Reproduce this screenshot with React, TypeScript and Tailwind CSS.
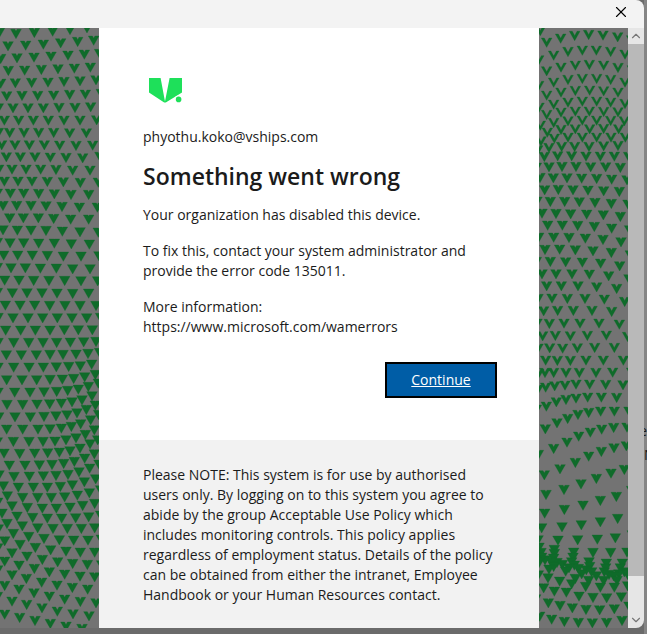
import { ChevronDown, ChevronUp, X } from 'lucide-react';

interface MarkRow {
  /** How deep the top of the arrow is cut: 0 is a solid triangle, 1 a thin V */
  cut: number;
  /** x, y pairs */
  at: number[];
}

const leftRows: MarkRow[] = [
  { cut: 0.3, at: [-2, 98, 48, 101, 103, 98, 158, 94, 210, 89, 261, 84] },
  { cut: 0.35, at: [24, 138, 77, 136, 130, 133, 182, 129, 233, 125, 281, 121] },
  { cut: 0.35, at: [2, 176, 51, 174, 102, 172, 153, 169, 204, 166, 253, 163, 299, 161] },
  { cut: 0.4, at: [25, 212, 74, 211, 124, 209, 174, 207, 223, 205, 271, 202] },
  { cut: 0.45, at: [2, 250, 46, 249, 95, 248, 144, 247, 192, 245, 240, 243, 288, 240] },
  { cut: 0.45, at: [20, 288, 66, 287, 113, 287, 161, 286, 209, 284, 256, 283, 304, 281] },
  { cut: 0.5, at: [-5, 324, 39, 324, 84, 324, 130, 324, 177, 323, 225, 323, 272, 321] },
  { cut: 0.55, at: [13, 361, 56, 361, 100, 361, 145, 361, 192, 361, 240, 361, 290, 360] },
  { cut: 0.55, at: [-5, 398, 29, 398, 72, 398, 116, 398, 161, 398, 209, 399, 259, 399] },
  { cut: 0.55, at: [5, 435, 45, 435, 88, 435, 133, 435, 179, 436, 228, 437, 278, 436] },
  { cut: 0.5, at: [19, 471, 61, 471, 105, 471, 151, 472, 198, 473, 248, 474, 300, 470] },
  { cut: 0.5, at: [-4, 508, 36, 508, 78, 508, 122, 508, 168, 509, 218, 511, 270, 511] },
  { cut: 0.4, at: [13, 544, 54, 544, 96, 544, 142, 545, 190, 546, 241, 548, 295, 547] },
  { cut: 0.3, at: [-8, 580, 31, 580, 71, 580, 116, 581, 163, 582, 213, 584, 266, 584] },
  { cut: 0.25, at: [9, 617, 50, 617, 93, 617, 138, 618, 186, 620, 238, 622, 292, 622] },
  { cut: 0.2, at: [29, 654, 70, 654, 115, 654, 161, 656, 212, 658, 266, 658] },
  { cut: 0.1, at: [9, 690, 52, 691, 93, 691, 138, 692, 187, 694, 240, 696, 295, 697] },
  { cut: 0.05, at: [-8, 728, 30, 729, 71, 729, 116, 730, 163, 730, 214, 732, 268, 733] },
  { cut: 0, at: [11, 766, 53, 766, 97, 766, 142, 767, 190, 769, 243, 769, 297, 768] },
  { cut: 0, at: [-8, 803, 33, 804, 76, 804, 121, 805, 169, 805, 218, 807, 270, 807] },
  { cut: 0, at: [14, 841, 57, 841, 101, 842, 147, 842, 194, 842, 243, 843, 293, 843] },
  { cut: 0, at: [-8, 878, 37, 879, 81, 879, 126, 879, 171, 880, 218, 881, 266, 880] },
  { cut: 0, at: [16, 916, 60, 916, 104, 916, 149, 917, 195, 917, 240, 917, 288, 917] },
  { cut: 0, at: [-6, 953, 39, 954, 84, 954, 128, 954, 172, 954, 216, 954, 260, 954, 302, 953] },
  { cut: 0, at: [17, 991, 62, 991, 106, 991, 150, 991, 193, 990, 235, 990, 277, 990] },
  { cut: 0, at: [-6, 1028, 41, 1028, 86, 1028, 129, 1028, 170, 1028, 211, 1027, 251, 1026, 288, 1025] },
  { cut: 0, at: [19, 1065, 64, 1065, 109, 1065, 150, 1064, 189, 1064, 228, 1063, 264, 1061, 299, 1058] },
  { cut: 0, at: [-6, 1102, 41, 1102, 87, 1102, 130, 1102, 169, 1101, 206, 1100, 241, 1098, 275, 1093] },
  { cut: 0, at: [20, 1140, 66, 1140, 110, 1140, 150, 1139, 187, 1138, 221, 1136, 254, 1131, 286, 1124] },
  { cut: 0, at: [-6, 1177, 44, 1177, 90, 1177, 132, 1176, 170, 1175, 203, 1172, 235, 1168, 265, 1160, 295, 1150] },
  { cut: 0.1, at: [21, 1214, 68, 1214, 111, 1213, 149, 1212, 184, 1210, 216, 1206, 246, 1200, 276, 1188] },
  { cut: 0.1, at: [-4, 1251, 45, 1251, 91, 1251, 132, 1250, 168, 1248, 201, 1245, 231, 1239, 259, 1229, 286, 1216] },
  { cut: 0.1, at: [20, 1288, 68, 1288, 114, 1288, 150, 1287, 184, 1285, 214, 1280, 242, 1272, 272, 1260, 296, 1244] },
  { cut: 0.1, at: [-8, 1326, 40, 1325, 87, 1325, 129, 1325, 165, 1324, 198, 1320, 228, 1314, 256, 1304, 283, 1290] },
  { cut: 0.1, at: [12, 1360, 59, 1361, 104, 1360, 143, 1359, 178, 1357, 210, 1353, 240, 1345, 270, 1332, 293, 1320] },
  { cut: 0.1, at: [28, 1396, 75, 1396, 118, 1395, 156, 1394, 191, 1391, 223, 1385, 254, 1375, 283, 1362] },
  { cut: 0.1, at: [-3, 1425, 42, 1430, 88, 1429, 130, 1428, 168, 1427, 204, 1424, 237, 1416, 269, 1405, 297, 1393] },
  { cut: 0.05, at: [10, 1458, 55, 1462, 100, 1462, 142, 1462, 181, 1460, 217, 1455, 253, 1446, 287, 1437] },
  { cut: 0.05, at: [22, 1488, 68, 1493, 113, 1493, 154, 1493, 194, 1491, 232, 1486, 268, 1479, 302, 1470] },
  { cut: 0.05, at: [-7, 1507, 36, 1518, 82, 1523, 127, 1525, 169, 1525, 210, 1522, 248, 1517, 284, 1511] },
  { cut: 0.05, at: [6, 1540, 51, 1549, 98, 1553, 142, 1555, 185, 1555, 227, 1554, 266, 1551, 302, 1546] },
  { cut: 0.05, at: [21, 1571, 67, 1578, 113, 1584, 159, 1586, 202, 1586, 244, 1586, 284, 1584] },
  { cut: 0.05, at: [-5, 1587, 40, 1601, 86, 1610, 132, 1616, 178, 1620, 221, 1621, 264, 1621, 304, 1618] },
  { cut: 0.1, at: [14, 1623, 60, 1634, 106, 1643, 152, 1650, 198, 1654, 241, 1657, 284, 1657] },
  { cut: 0.15, at: [-7, 1644, 36, 1659, 81, 1669, 127, 1679, 173, 1686, 218, 1691, 262, 1694, 305, 1695] },
  { cut: 0.2, at: [14, 1684, 57, 1696, 103, 1706, 148, 1716, 194, 1723, 240, 1729, 284, 1731] },
  { cut: 0.25, at: [-7, 1710, 36, 1725, 79, 1736, 125, 1747, 171, 1756, 217, 1763, 263, 1768] },
  { cut: 0.35, at: [14, 1757, 57, 1768, 102, 1779, 148, 1789, 194, 1798, 241, 1805, 288, 1809] },
  { cut: 0.45, at: [-8, 1790, 36, 1804, 80, 1814, 126, 1824, 172, 1834, 219, 1842, 267, 1848] },
  { cut: 0.4, at: [14, 1843, 59, 1853, 105, 1862, 151, 1871, 198, 1879, 246, 1886] },
];

const rightRows: MarkRow[] = [
  { cut: 0.65, at: [10, 92, 29, 127, 71, 115, 113, 107, 155, 104, 198, 106, 242, 111, 284, 120] },
  { cut: 0.75, at: [5, 180, 50, 166, 93, 155, 136, 151, 178, 151, 221, 155, 264, 163] },
  { cut: 0.75, at: [29, 213, 72, 202, 115, 196, 157, 194, 200, 196, 243, 203, 286, 210] },
  { cut: 0.8, at: [5, 257, 50, 247, 93, 239, 136, 236, 179, 236, 221, 239, 264, 247] },
  { cut: 0.8, at: [29, 286, 72, 277, 115, 272, 158, 271, 200, 273, 243, 277] },
  { cut: 0.8, at: [6, 322, 50, 313, 93, 307, 136, 304, 179, 304, 221, 307, 264, 311] },
  { cut: 0.8, at: [29, 344, 72, 337, 115, 334, 157, 334, 200, 335, 243, 336] },
  { cut: 0.8, at: [10, 376, 50, 368, 93, 363, 136, 361, 179, 361, 221, 362, 262, 363] },
  { cut: 0.75, at: [31, 397, 72, 389, 115, 387, 158, 387, 200, 386, 245, 387] },
  { cut: 0.75, at: [12, 423, 52, 415, 93, 412, 136, 412, 179, 412, 222, 412, 265, 412] },
  { cut: 0.7, at: [2, 450, 36, 443, 74, 440, 113, 440, 156, 440, 200, 438, 243, 437] },
  { cut: 0.55, at: [22, 470, 62, 468, 104, 468, 147, 469, 190, 469, 232, 469, 275, 470] },
  { cut: 0.45, at: [-2, 502, 36, 501, 75, 500, 117, 500, 161, 501, 206, 501, 250, 503] },
  { cut: 0.4, at: [9, 533, 49, 534, 90, 534, 134, 535, 179, 536, 224, 538, 270, 540] },
  { cut: 0.35, at: [23, 570, 64, 569, 108, 570, 153, 571, 200, 573, 247, 575] },
  { cut: 0.3, at: [0, 604, 40, 605, 83, 605, 127, 606, 174, 608, 223, 611, 273, 613] },
  { cut: 0.25, at: [15, 640, 57, 641, 101, 642, 149, 643, 199, 645, 250, 650] },
  { cut: 0.25, at: [32, 676, 76, 676, 122, 677, 172, 680, 224, 685, 278, 690] },
  { cut: 0.3, at: [5, 712, 50, 712, 96, 713, 145, 715, 198, 719, 252, 726] },
  { cut: 0.3, at: [24, 749, 68, 748, 115, 750, 168, 753, 223, 758, 280, 765] },
  { cut: 0.35, at: [-2, 785, 40, 785, 86, 786, 136, 787, 191, 790, 248, 798] },
  { cut: 0.4, at: [15, 822, 57, 822, 105, 822, 157, 823, 215, 828, 276, 837] },
  { cut: 0.45, at: [29, 858, 73, 858, 123, 858, 179, 861, 239, 866] },
  { cut: 0.5, at: [3, 896, 45, 895, 91, 896, 144, 896, 202, 898, 263, 905] },
  { cut: 0.55, at: [20, 933, 62, 932, 109, 932, 165, 932, 224, 935] },
  { cut: 0.6, at: [0, 970, 37, 971, 81, 970, 129, 970, 186, 970, 247, 973] },
  { cut: 0.65, at: [17, 1008, 55, 1007, 100, 1008, 151, 1007, 208, 1006, 272, 1010] },
  { cut: 0.65, at: [3, 1045, 38, 1044, 77, 1045, 121, 1044, 173, 1043, 232, 1043] },
  { cut: 0.6, at: [26, 1081, 61, 1082, 100, 1082, 147, 1081, 199, 1081, 259, 1081] },
  { cut: 0.6, at: [5, 1120, 24, 1118, 50, 1118, 87, 1118, 127, 1118, 177, 1118, 227, 1117, 284, 1117] },
  { cut: 0.55, at: [3, 1168, 26, 1162, 53, 1158, 84, 1156, 117, 1153, 158, 1153, 206, 1154, 258, 1155] },
  { cut: 0.5, at: [28, 1219, 58, 1206, 87, 1199, 117, 1195, 152, 1192, 193, 1192, 239, 1193] },
  { cut: 0.4, at: [-2, 1228, 60, 1269, 92, 1256, 123, 1244, 155, 1238, 191, 1234, 232, 1234, 276, 1234] },
  { cut: 0.4, at: [25, 1287, 125, 1309, 160, 1297, 194, 1288, 230, 1283, 270, 1282] },
  { cut: 0.4, at: [4, 1364, 50, 1346, 90, 1327] },
  { cut: 0.35, at: [22, 1425, 69, 1407, 115, 1388, 155, 1369, 193, 1355, 231, 1344, 268, 1338] },
  { cut: 0.25, at: [27, 1484, 81, 1469, 132, 1452, 178, 1436, 222, 1420, 262, 1409] },
  { cut: 0.15, at: [23, 1540, 82, 1529, 138, 1516, 190, 1502, 238, 1490, 284, 1472] },
  { cut: 0.05, at: [14, 1584, 75, 1581, 133, 1575, 190, 1566, 242, 1556] },
  { cut: 0, at: [3, 1620, 63, 1621, 122, 1620, 181, 1618, 235, 1614, 286, 1605] },
  { cut: 0, at: [52, 1649, 110, 1657, 168, 1658, 221, 1658, 270, 1657] },
  { cut: 0, at: [6, 1642, 12, 1658, 14, 1672, 24, 1680, 6, 1688, 52, 1661, 50, 1675, 42, 1685, 60, 1688, 76, 1694] },
  { cut: 0, at: [50, 1700, 36, 1708, 108, 1672, 104, 1686, 112, 1696, 124, 1706, 96, 1704, 86, 1714] },
  { cut: 0, at: [156, 1686, 158, 1700, 148, 1710, 164, 1716, 178, 1728, 134, 1722] },
  { cut: 0, at: [208, 1690, 206, 1704, 202, 1716, 216, 1724, 230, 1728, 256, 1690, 250, 1704, 262, 1716, 246, 1722, 272, 1724] },
  { cut: 0.05, at: [4, 1725, 33, 1734, 68, 1744, 104, 1752, 115, 1736, 146, 1760, 155, 1742, 200, 1742, 190, 1762, 232, 1762, 240, 1742, 272, 1758] },
  { cut: 0.1, at: [20, 1764, 52, 1774, 88, 1777, 126, 1789, 168, 1793, 209, 1794, 253, 1791] },
  { cut: 0.2, at: [-4, 1797, 34, 1809, 69, 1817, 106, 1824, 147, 1829, 188, 1830, 232, 1827, 276, 1819] },
  { cut: 0.3, at: [8, 1849, 44, 1858, 82, 1865, 124, 1868, 166, 1869, 209, 1868, 255, 1862] },
];

// Triangle pointing down with a wedge taken out of its top edge
function markPath(x: number, y: number, cut: number) {
  const inner = 16 - 11 * cut;
  const wedge = cut === 0 ? '' : `L${x + 16 - inner} ${y - 13}L${x} ${y - 13 + 20 * cut}L${x - 16 + inner} ${y - 13}`;
  return `M${x - 16} ${y - 13}L${x} ${y + 15}L${x + 16} ${y - 13}${wedge}Z`;
}

function rowPath(row: MarkRow) {
  let d = '';
  for (let i = 0; i < row.at.length; i += 2) {
    d += markPath(row.at[i], row.at[i + 1], row.cut);
  }
  return d;
}

function Backdrop({ rows, viewBox }: { rows: MarkRow[]; viewBox: string }) {
  return (
    <div className="relative overflow-hidden bg-[#737373]">
      <svg
        aria-hidden="true"
        viewBox={viewBox}
        preserveAspectRatio="xMinYMin slice"
        className="absolute inset-0 h-full w-full fill-[#0f6b2a] stroke-[#0f6b2a] stroke-1"
      >
        {rows.map((row, i) => (
          <path key={i} d={rowPath(row)} />
        ))}
      </svg>
    </div>
  );
}

function Logo() {
  return (
    <svg viewBox="0 0 44 39" className="h-[39px] w-11" role="img" aria-label="V.Ships">
      <path d="M6 6H17.6L22 29.5L26.6 6H39V20.5L23.2 30.2Q22 31 20.8 30.2L6 20.5Z" fill="#1ee05a" />
      <circle cx="35.6" cy="27.4" r="3.8" fill="#ffffff" />
      <circle cx="35.6" cy="27.4" r="2.8" fill="#1ee05a" />
    </svg>
  );
}

function Scrollbar() {
  return (
    <div className="flex w-4 shrink-0 flex-col bg-[#e6e6e6] text-[#777777]">
      <button aria-label="Scroll up" className="flex h-4 items-center justify-center">
        <ChevronUp className="h-3.5 w-3.5" strokeWidth={2} />
      </button>
      <div className="flex-1 bg-[#b9b9b9]" />
      <div className="h-9" />
      <button aria-label="Scroll down" className="flex h-4 items-center justify-center">
        <ChevronDown className="h-3.5 w-3.5" strokeWidth={2} />
      </button>
    </div>
  );
}

export default function App() {
  return (
    <div className="relative min-h-screen overflow-hidden bg-[#6b6b6b] pr-[3px] pb-1.5 font-['Open_Sans','Noto_Sans',sans-serif] text-[#1b1b1b]">
      {/* Page behind the dialog */}
      <div
        aria-hidden="true"
        className="absolute top-0 right-0 bottom-0 w-[3px] overflow-hidden bg-[#858585] pt-[419px] text-sm leading-6"
      >
        <div className="flex justify-end">e</div>
        <div>N</div>
      </div>

      <div
        role="dialog"
        aria-labelledby="title"
        className="relative flex min-h-[calc(100vh-6px)] flex-col overflow-hidden rounded-br-lg rounded-tr-lg"
      >
        <header className="flex h-7 shrink-0 items-center justify-end bg-[#f3f3f3] pr-3.5 pb-1">
          <button aria-label="Close" className="text-black">
            <X className="h-[18px] w-[18px]" strokeWidth={1.5} />
          </button>
        </header>

        <div className="flex flex-1">
          <div className="grid flex-1 grid-cols-[99fr_440px_89fr]">
            <Backdrop rows={leftRows} viewBox="0 84 297 1800" />

            <main className="flex flex-col bg-white text-sm leading-5">
              <div className="flex flex-1 flex-col gap-4 pt-11 pr-[42px] pb-[42px] pl-11">
                <Logo />
                <div>phyothu.koko@vships.com</div>
                <h1 id="title" className="text-[23px] leading-[26px] font-semibold">
                  Something went wrong
                </h1>
                <p>Your organization has disabled this device.</p>
                <p>
                  To fix this, contact your system administrator and provide the error code 135011.
                </p>
                <p>
                  More information:
                  <br />
                  https://www.microsoft.com/wamerrors
                </p>
                <div className="mt-auto flex justify-end">
                  <button className="h-9 w-28 border-2 border-black bg-[#005da6] text-white underline">
                    Continue
                  </button>
                </div>
              </div>

              <footer className="bg-[#f2f2f2] px-11 pt-[25px] pb-[23px]">
                Please NOTE: This system is for use by authorised users only. By logging on to this
                system you agree to abide by the group Acceptable Use Policy which includes
                monitoring controls. This policy applies regardless of employment status. Details of
                the policy can be obtained from either the intranet, Employee Handbook or your Human
                Resources contact.
              </footer>
            </main>

            <Backdrop rows={rightRows} viewBox="6 84 267 1800" />
          </div>
          <Scrollbar />
        </div>
      </div>
    </div>
  );
}
